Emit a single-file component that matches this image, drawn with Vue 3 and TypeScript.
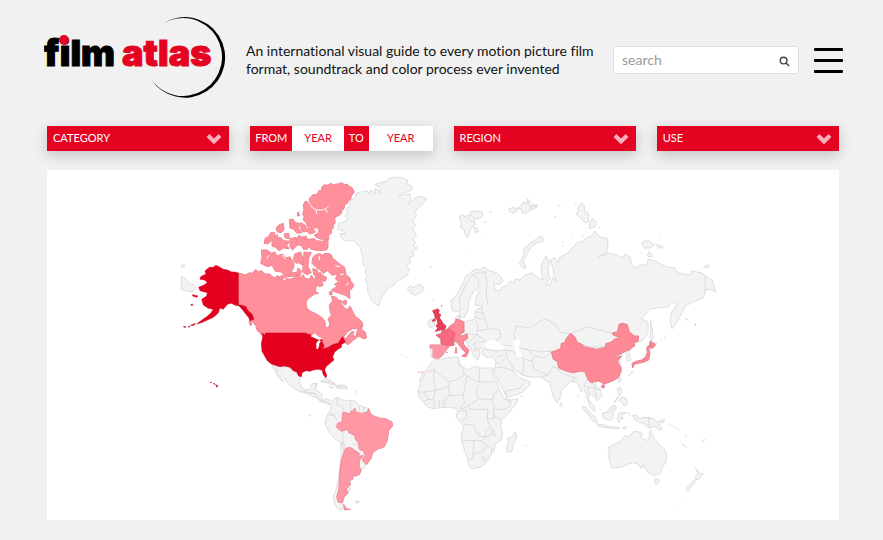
<script setup lang="ts">
import { ref } from 'vue'

interface Shape {
  tone: string
  d: string
}
interface Sheet {
  x: number
  y: number
  shapes: Shape[]
}

const query = ref('')
const fromYear = ref('')
const toYear = ref('')

// Each sheet is drawn at three times the map's scale, from its own origin.
const sheets: Sheet[] = [
  {
    x: 170, y: 250,
    shapes: [
      { tone: 'land', d: 'M34 78L48 86 55 98 72 104 78 115 66 126 50 122 34 120ZM34 44L44 46 42 52 34 52Z' },
      { tone: 'land', d: 'M306 345L318 349 340 350 358 352 366 360 380 372 392 378 388 395 395 412 408 420 422 418 428 404 442 400 438 415 432 425 448 430 455 450 468 446 480 450 470 459 452 455 440 444 428 440 410 430 390 425 370 415 352 398 340 382 328 366 318 352 322 368 334 384 340 395 330 388 320 372 310 356ZM450 395L462 387 480 390 496 402 480 400 465 394ZM498 408L512 404 530 410 522 415 500 414ZM478 410L490 412 484 416Z' },
      { tone: 'canada', d: 'M205 69L218 72 225 75 240 68 246 70 258 58 262 66 275 62 285 72 300 72 304 78 318 84 322 76 330 86 345 92 350 84 360 88 375 82 385 72 392 84 400 74 405 85 418 88 424 76 434 88 442 72 450 66 460 78 470 82 466 94 454 92 460 106 448 110 440 104 436 124 446 130 434 132 414 146 408 156 410 172 418 182 440 192 460 206 466 218 466 230 474 234 480 222 474 206 484 196 480 182 478 165 488 152 484 138 498 142 506 150 514 152 516 164 526 176 534 178 540 168 548 184 556 200 566 206 576 216 578 230 564 236 548 236 532 246 520 262 527 266 544 246 552 244 548 256 562 262 548 272 534 284 526 280 520 262 505 280 490 283 475 292 458 297 455 275 445 265 430 258 405 249 280 249 268 243 262 230 255 225 245 210 232 198 220 182 205 165Z' },
      { tone: 'canada', d: 'M562 240L570 236 578 220 574 238 586 246 590 264 580 266 570 260 558 258ZM258 232L270 240 282 252 274 254 262 242ZM240 208L246 218 242 228 237 216Z' },
      { tone: 'us', d: 'M205 69L196 66 185 66 172 60 160 58 150 52 138 46 130 52 118 52 105 63 108 72 92 80 90 88 104 90 112 98 100 106 86 112 90 122 112 128 110 138 95 148 100 165 115 175 130 178 122 190 110 200 96 210 80 222 94 218 112 210 130 202 144 190 150 174 160 178 172 163 185 160 196 166 206 167 214 174 225 188 236 202 240 212 252 208 246 192 234 182 228 170 216 166 205 165ZM68 134L84 138 80 142 68 138ZM63 163L68 163 68 166 63 166ZM62 226L76 220 72 226ZM40 230L48 230 46 233ZM54 230L60 228 58 232Z' },
      { tone: 'us', d: 'M276 250L284 254 286 249 405 249 412 252 428 256 438 262 450 262 458 272 445 270 440 284 438 296 444 298 448 282 454 272 462 286 458 297 475 292 490 283 505 280 512 268 518 260 526 276 514 284 514 292 504 298 494 306 488 320 492 330 480 340 468 350 464 360 470 376 468 384 460 374 456 360 444 358 430 360 420 364 408 362 396 368 394 380 386 378 380 366 370 362 360 352 344 348 330 350 316 346 304 342 292 332 284 318 276 304 274 280 278 262Z' },
      { tone: 'water', d: 'M424 258L434 252 444 260 456 266 446 268 436 264ZM440 280L446 272 446 288 442 296Z' },
      { tone: 'us', d: 'M136 403L144 408 141 412ZM121 396L125 397 122 399ZM130 400L134 401 131 403Z' },
    ],
  },
  {
    x: 240, y: 170,
    shapes: [
      { tone: 'canada', d: 'M208 92L208 84 216 80 215 76 232 72 236 62 244 62 246 50 254 44 262 46 272 40 280 44 292 42 306 38 314 44 322 42 328 50 336 52 343 66 334 78 332 88 326 92 322 100 314 104 312 116 306 120 304 130 298 136 288 140 284 146 286 158 280 166 280 174 274 180 274 190 266 196 266 208 252 210 232 204 222 196 234 190 238 178 228 176 220 178 210 170 204 172 198 158 190 150 192 140 188 132 192 120 190 104 196 94 204 96Z' },
      { tone: 'channel', d: 'M204 92L212 106 218 114 230 120 248 120 258 116 266 108M228 120L230 132M258 118L262 128M216 178L232 176 226 188' },
      { tone: 'canada', d: 'M204 208L222 206 230 212 248 214 264 206 264 230 260 240 236 242 214 238 204 230 208 218ZM170 204L178 196 186 202 198 198 204 212 206 218 202 238 190 238 186 228 174 224ZM180 158L194 164 200 172 202 184 192 186 184 182ZM204 176L216 174 226 186 212 192 204 188ZM148 148L160 148 166 158 178 160 176 176 186 188 172 190 160 178 150 174ZM118 164L130 160 132 180 124 188 112 186 108 174ZM172 128L176 126 178 138 173 138ZM92 188L104 188 104 206 94 212 84 222 72 220 76 204 86 200ZM96 214L110 206 120 202 132 212 150 214 140 226 148 236 130 234 118 242 106 232 96 228ZM150 206L168 202 172 226 158 240 150 230ZM132 192L146 190 148 206 136 204ZM104 198L112 194 114 202 106 206Z' },
      { tone: 'canada', d: 'M64 240L82 240 94 250 104 246 110 258 128 252 138 264 150 260 162 280 160 296 152 306 170 308 172 318 140 320 124 328 106 326 132 314 124 306 106 304 96 286 82 290 62 280 66 262ZM164 252L182 246 188 264 188 286 176 278 168 280 160 270ZM192 246L214 248 206 264 204 290 214 308 200 314 188 306 190 280ZM174 294L184 302 182 316 170 310ZM224 256L240 250 246 256 254 250 272 252 280 268 286 270 292 276 304 286 314 292 318 314 330 324 332 334 342 344 336 356 328 362 330 386 316 376 304 372 286 366 274 360 290 350 284 342 296 336 286 326 294 312 276 316 262 302 250 310 240 300 228 292 216 280 218 264ZM308 394L318 390 320 402 312 404ZM218 296L232 300 234 320 222 316ZM240 318L250 316 252 326 242 330ZM268 366L276 364 276 374 268 374Z' },
      { tone: 'channel', d: 'M128 254L136 268M238 258L238 270M286 288L300 290M300 314L312 312M318 344L326 340M86 256L80 268' },
      { tone: 'land', d: 'M296 160L318 154 322 146 316 140 324 126 318 118 330 108 328 94 346 82 350 70 372 64 382 62 390 74 392 60 408 70 404 56 412 58 420 72 420 52 404 44 420 38 440 34 446 26 464 22 486 22 504 32 500 40 516 50 516 60 500 66 484 70 476 78 494 74 510 72 512 88 506 104 524 84 540 78 560 86 552 98 536 114 524 126 530 138 518 152 526 166 518 178 530 196 518 206 526 218 520 228 532 234 518 246 522 258 508 262 512 276 500 288 508 300 500 318 484 326 470 334 462 346 446 352 432 372 424 384 416 408 404 400 394 390 388 374 382 360 384 344 376 328 382 316 374 308 380 294 370 286 368 266 364 250 362 232 350 222 340 210 316 214 304 204 300 190 316 192 312 184 292 178 296 168Z' },
      { tone: 'land', d: 'M504 352L514 348 518 354 530 346 544 344 552 356 546 366 526 376 512 370 516 364 504 362ZM572 292L576 290M578 388L582 390' },
    ],
  },
  {
    x: 300, y: 380,
    shapes: [
      { tone: 'land', d: 'M0 34L18 34 32 24 34 12 48 10 46 30 66 42 64 60 82 66 86 72 100 58 112 52 128 60 150 62 166 64 178 76 196 82 208 88 208 150 190 248 198 252 192 266 178 264 182 276 170 290 152 290 150 330 122 366 130 388 120 390 106 378 100 350 108 330 114 300 120 260 124 220 122 188 104 176 88 158 74 128 82 104 92 90 94 74 82 74 70 66 58 60 46 42 24 38Z' },
      { tone: 'border', d: 'M112 52L112 74 130 82 132 96M152 62L152 84M180 76L176 98M192 82L190 100M82 104L104 108 112 122M104 108L92 96M128 154L130 188 124 200M130 188L136 204M158 194L174 192 178 210 190 212M30 36L48 42M64 62L70 66M124 186L132 210 122 250 118 320' },
      { tone: 'land', d: 'M68 6L88 6 108 16 92 14 80 8ZM112 22L132 18 144 26 128 26ZM164 366L178 364 174 370ZM28 104L33 106 30 109ZM168 30L170 40' },
      { tone: 'brazil', d: 'M128 98L138 98 148 102 154 92 158 94 164 84 170 98 188 100 202 96 206 86 212 102 222 108 238 114 258 116 276 126 278 138 266 152 262 182 252 202 236 206 218 218 214 234 200 254 186 240 196 226 190 212 178 208 176 190 166 178 164 166 146 158 142 148 124 154 110 142 112 130 126 126Z' },
      { tone: 'brazil', d: 'M136 206L150 202 160 208 178 220 176 230 190 226 178 242 178 262 184 270 178 284 160 288 158 298 146 302 152 312 140 326 144 340 132 350 128 368 114 366 110 350 116 330 118 300 120 270 124 240 130 224ZM130 372L140 386 152 388 134 390Z' },
    ],
  },
  {
    x: 400, y: 340,
    shapes: [
      { tone: 'land', d: 'M106 58L122 58 150 52 174 52 178 64 176 76 192 82 204 90 216 84 222 78 240 84 270 84 280 84 278 100 290 126 298 150 308 168 312 176 330 180 354 176 348 192 330 214 306 238 302 258 308 286 302 302 286 312 282 332 270 350 258 370 240 382 214 386 206 376 202 354 194 334 186 306 184 286 190 262 182 246 168 232 172 214 172 206 152 202 132 202 116 204 98 206 82 200 68 184 56 168 54 152 60 138 60 118 70 98 84 84 94 68Z' },
      { tone: 'border', d: 'M104 88L76 98 76 104 60 128M104 88L104 92 146 124 170 120 194 104 186 82 174 64M104 92L100 98 106 152 72 156 56 156M106 152L118 148 146 138 148 124M146 138L150 166 136 176 136 202M194 104L200 108 238 128 238 84M238 126L284 126M238 136L230 142 230 160 236 176 258 178 276 180 282 164 294 150M200 108L194 150 188 166 150 166M188 166L194 188 180 206 190 206 206 196 232 180M206 196L208 208 264 208 262 240 272 262 256 272 258 290 236 288 234 276 226 276 224 256 192 252M172 214L200 210 200 232 184 242M118 180L118 202M104 178L102 204M72 156L84 178 98 180 106 152M84 178L72 184M128 178L130 202M276 180L284 196 280 208 308 208 326 202 334 186 312 176M280 208L282 236 264 236M282 228L302 240M184 300L222 302 246 302 258 292 276 282 276 266M222 302L218 352 206 362M222 340L244 338 262 318 244 300M262 318L276 326 272 342M286 290L280 270 276 266M248 352L258 356 252 364 246 358Z' },
      { tone: 'land', d: 'M346 276L350 290 342 310 334 336 322 336 320 320 326 308 322 296 336 290ZM362 168L370 170M370 318L374 320M380 314L384 316M4 42L10 44M16 48L20 50M54 74L58 76' },
      { tone: 'spain', d: 'M54 96L58 98M62 96L66 97M68 94L70 97' },
    ],
  },
  {
    x: 400, y: 190,
    shapes: [
      { tone: 'land', d: 'M178 80L190 74 196 82 206 72 214 96 222 88 226 104 216 112 208 126 204 142 196 136 192 118 182 112 184 100ZM210 66L228 62 246 66 248 78 240 86 226 86 212 78ZM222 112L232 114 236 124 226 128ZM328 56L344 52 352 62 340 70 328 64ZM350 56L364 46 372 36 384 42 382 26 390 34 388 48 410 44 412 50 394 56 386 64 376 72 364 66 366 56ZM268 68L276 64M252 98L260 96M238 146L242 144M212 180L215 182M90 232L95 230M98 328L102 331M464 80L470 84' },
      { tone: 'land', d: 'M358 222L370 198 372 176 388 162 408 148 422 138 430 144 428 154 408 160 394 172 386 184 378 196 370 214 378 234 370 236Z' },
      { tone: 'land', d: 'M86 392L96 388 106 394 102 410 88 412 84 400Z' },
      { tone: 'uk', d: 'M98 362L106 360 112 356 118 362 114 370 122 374 118 384 124 392 130 402 138 408 134 418 122 420 106 424 114 414 108 408 114 400 112 390 106 384 104 374ZM98 390L104 386 106 392 98 394ZM124 346L126 350' },
    ],
  },
  {
    x: 530, y: 190,
    shapes: [
      { tone: 'land', d: 'M138 72L146 64 142 56 156 38 164 50 164 64 176 72 176 94 168 98 156 90 146 80ZM188 84L200 98 196 110 178 116 180 98ZM334 160L344 152 360 154 374 164 362 174 342 174ZM378 164L394 168 400 174 386 174ZM352 196L358 184 368 200 356 200ZM522 230L530 224 538 230 530 234ZM0 60L8 42 14 52 22 46 14 56ZM84 48L92 46M72 80L78 82M134 40L140 42M96 156L102 156M96 172L100 166M126 136L130 132M156 138L162 134M204 112L210 114M388 144L392 142M332 188L336 190M464 386L474 390' },
      { tone: 'land', d: 'M362 392L366 420 370 442 364 456 360 440 362 420ZM376 462L384 456M390 452L396 448M402 446L406 440M416 430L418 428' },
      { tone: 'china', d: 'M362 454L376 466 368 474 358 474ZM494 403L498 405' },
    ],
  },
  {
    x: 530, y: 310,
    shapes: [
      { tone: 'land', d: 'M236 412L250 404 272 394 284 378 296 380 310 366 322 364 336 370 332 382 350 392 358 386 358 366 362 360 368 376 376 390 388 404 402 416 410 432 408 456 396 474 390 492 372 496 354 488 346 476 342 464 334 476 324 462 308 458 288 464 272 472 246 474 240 456 234 432 238 426ZM374 506L386 508 388 516 378 524 374 514ZM496 474L504 482 508 490 520 490 510 504 500 510 496 500 504 492ZM496 508L494 520 480 534 474 544 468 538 480 522Z' },
      { tone: 'land', d: 'M156 290L168 292 182 310 196 322 204 340 190 334 176 316ZM202 344L220 344 238 350 268 352 266 356 238 354 206 350ZM276 354L292 350 284 358ZM216 310L228 308 240 294 254 284 260 294 250 306 248 326 238 332 220 322ZM264 312L272 308 290 308 274 316 280 328 272 324 268 338 262 330 266 318ZM308 316L320 316 328 326 342 322 372 326 386 342 398 356 390 360 376 350 356 354 342 340 326 336 314 328ZM386 334L404 328 400 338 388 338ZM262 236L270 232 276 246 268 256 264 248ZM274 262L288 264 292 282 284 290 274 276 266 270ZM252 276L266 258 256 276ZM264 206L270 202 272 210 268 218ZM414 340L422 346M428 348L434 352M438 354L448 362M464 376L470 384M456 402L470 412M514 394L526 388M518 396L522 400M90 276L98 284 92 290 88 282M144 256L146 264M296 306L300 320M210 296L212 298M464 570L468 572M432 598L434 599' },
      { tone: 'border', d: 'M356 320L358 354M222 310L238 306 254 294' },
      { tone: 'china', d: 'M64 126L76 122 92 116 94 100 104 98 108 86 122 70 136 82 140 96 158 104 162 110 200 118 226 112 228 100 240 98 256 86 272 82 250 76 248 68 262 66 268 42 280 40 292 44 298 66 314 78 326 78 324 94 312 98 314 108 296 120 278 128 262 138 258 132 270 124 262 122 256 136 262 142 276 138 264 150 264 160 272 168 274 182 266 202 250 212 234 218 222 222 204 212 184 218 176 212 170 200 164 184 150 184 130 188 110 184 86 174 82 154 70 148ZM216 226L224 224 222 234 214 232Z' },
      { tone: 'china', d: 'M360 94L376 102 374 106 362 108 356 116 360 128 356 150 342 156 326 160 314 162 308 174 306 160 318 154 334 150 346 142 352 128 350 112 358 106ZM304 188L308 186M297 196L300 193' },
    ],
  },
]

const eurasia =
  'M451 300L455 297 460 290 461 286 464 281 466 276 470 274 472 271 477 269 480 270 483 267 488 270 497 273 501 277 503 281 500 285 494 283 495 290 500 291 502 287 508 285 510 281 514 283 515 279 520 280 525 275 532 273 537 277 543 280 541 270 542 263 546 256 549 262 548 272 550 279 546 285 550 285 553 277 557 282 554 275 553 268 550 260 555 258 558 263 560 257 568 253 571 249 578 242 582 242 588 237 592 236 595 231 600 237 607 238 608 244 607 252 598 257 610 253 617 255 623 258 625 254 630 257 632 266 635 268 640 265 647 265 648 259 655 261 661 264 667 267 675 268 678 273 690 275 692 271 702 273 707 277 712 280 716 292 712 290 707 289 705 293 703 298 693 302 685 306 682 313 677 322 672 329 670 322 671 313 677 305 673 302 668 307 657 308 650 309 641 319 647 321 648 323 648 333 642 341 634 343 630 347 629 352 631 360 627 361 626 352 622 351 620 360 620 370 615 378 608 382 598 381 595 384 600 389 602 396 597 401 594 397 590 393 588 399 594 406 595 412 590 407 587 397 584 389 581 392 578 383 571 381 566 386 562 390 560 398 557 403 553 396 551 387 549 382 545 380 540 377 530 377 522 375 515 370 513 371 519 377 523 379 530 382 529 386 523 392 507 398 503 390 499 382 494 372 496 362 493 357 486 357 482 354 482 349 478 348 480 353 478 360 474 357 471 350 467 343 461 338 455 345 449 344 446 352 440 358 435 359 431 357 430 345 441 345 441 339 436 335 443 333 450 326 455 322 456 317 460 315 459 322 468 321 475 319 475 311 483 306 475 305 476 298 479 292 476 289 472 294 469 301 468 310 465 317 461 318 459 311 455 312 452 310Z'

const eurasiaBorders =
  'M461 311L459 300 463 290 468 281 472 275 480 272 487 272M479 288L478 278 472 275M488 305L486 295 487 284 485 272M481 307L485 320 488 328 500 330 501 337 496 341M463 322L464 333 477 335 478 323 475 320M477 331L488 329M477 335L485 340 488 345M467 336L464 344 472 349M477 335L470 341 466 341M471 346L476 342 485 342M473 351L480 348M475 343L475 350M475 317L484 320M476 312L484 313M517 343L514 335 516 326 530 328 540 321 545 319 555 324 560 332 570 334 587 327 600 330 614 334M572 334L578 343 590 347 604 347M514 345L520 348 530 350 540 352 552 351M525 348L535 356 545 358 551 352M535 356L532 361 534 369 548 375 553 367 557 368M532 361L523 359 518 353 506 350 506 356 512 366 514 370M522 375L524 367 523 359M541 377L548 375M556 369L563 374 573 377 573 382M574 377L578 379M506 350L496 351 484 349M497 357L503 355M496 362L500 364 505 358M497 368L503 367 513 371M507 398L506 391 520 388 523 384M587 379L584 386 589 387 588 394M591 380L596 389 601 390M589 387L594 388 597 398M705 276L705 292M626 350L632 350M459 322L460 316M502 345L512 346'

const seas =
  'M486 343L493 340 500 344 505 347 500 350 486 348ZM514 341L520 339 518 347 522 356 518 357 515 349ZM460 338L464 342 471 352 468 352 462 344Z'
</script>

<template>
  <div class="page">
    <header class="top">
      <a class="logo" href="#" aria-label="film atlas">
        <svg viewBox="0 0 190 90">
          <text class="logo-dark" x="0" y="54">film</text>
          <text class="logo-red" x="78" y="54">atlas</text>
          <circle class="logo-dot" cx="20" cy="28" r="5" />
          <path d="M119 11.500A40.300 40.300 0 1 1 106.500 66.500A39 39 0 1 0 119 11.500Z" />
        </svg>
      </a>
      <p class="tagline">
        An international visual guide to every motion picture film<br />format, soundtrack and color process ever invented
      </p>
      <form class="search" role="search" @submit.prevent>
        <input v-model="query" type="text" placeholder="search" aria-label="search" />
        <button type="submit" aria-label="Submit search">
          <svg viewBox="0 0 12 12"><circle cx="5" cy="5" r="3.600" /><path d="M7.600 7.600L11 11" /></svg>
        </button>
      </form>
      <button class="menu" type="button" aria-label="Menu"><span /><span /><span /></button>
    </header>

    <main>
      <div class="filters">
        <div class="pick">
          <select aria-label="Category"><option>CATEGORY</option></select>
          <svg viewBox="0 0 16 11"><path d="M2 2.500L8 8.500 14 2.500" /></svg>
        </div>
        <div class="years">
          <label for="from-year">FROM</label>
          <input id="from-year" v-model="fromYear" class="from" type="text" placeholder="YEAR" />
          <label for="to-year">TO</label>
          <input id="to-year" v-model="toYear" class="to" type="text" placeholder="YEAR" />
        </div>
        <div class="pick">
          <select aria-label="Region"><option>REGION</option></select>
          <svg viewBox="0 0 16 11"><path d="M2 2.500L8 8.500 14 2.500" /></svg>
        </div>
        <div class="pick">
          <select aria-label="Use"><option>USE</option></select>
          <svg viewBox="0 0 16 11"><path d="M2 2.500L8 8.500 14 2.500" /></svg>
        </div>
      </div>

      <section class="map" aria-label="World map">
        <svg viewBox="47 170 792 350">
          <path class="land" :d="eurasia" />
          <path class="border" :d="eurasiaBorders" />
          <path class="water" :d="seas" />
          <path class="germany" d="M450 326L455 323 456 319 460 320 464 322 464 332 459 335 462 336 467 334 468 338 463 341 464 345 469 350 468 353 466 357 462 356 466 353 462 349 457 342 453 341 453 336 450 332 447 330Z" />
          <path class="france" d="M436 335L441 334 442 331 449 329 455 333 453 341 454 345 449 346 441 344 441 339Z" />
          <path class="spain" d="M430 345L441 345 449 347 445 351 442 356 437 359 433 357 433 348 430 348ZM446 352L448 353M456 347L457 353 455 353Z" />
          <g v-for="sheet in sheets" :key="`${sheet.x}-${sheet.y}`" :transform="`translate(${sheet.x} ${sheet.y}) scale(0.33333)`">
            <path v-for="(shape, i) in sheet.shapes" :key="i" :class="shape.tone" :d="shape.d" />
          </g>
        </svg>
      </section>
    </main>
  </div>
</template>

<style>
body {
  margin: 0;
  background: #f1f1f1;
}
</style>

<style scoped>
.page {
  padding: 15px 44px 20px 47px;
  font-family: Lato, "Liberation Sans", sans-serif;
  font-variant-ligatures: none;
  color: #111;
}
.top {
  display: flex;
  align-items: center;
  height: 90px;
  margin: 0 -4px 0 -3px;
}
.logo {
  width: 190px;
  height: 90px;
  flex: none;
  margin-top: -6px;
}
.logo svg {
  display: block;
  width: 100%;
}
.logo text {
  font-family: Inter, Lato, sans-serif;
  font-size: 36px;
  font-weight: 900;
  stroke-width: 1px;
}
.logo-dark {
  fill: #000;
  stroke: #000;
}
.logo-red {
  stroke: #e50322;
}
.logo-red,
.logo-dot {
  fill: #e50322;
}
.tagline {
  flex: 1;
  margin: 0 0 0 12px;
  font-size: 14px;
  line-height: 18px;
  white-space: nowrap;
}
.search {
  display: flex;
  width: 186px;
  height: 28px;
  box-sizing: border-box;
  border: 1px solid #e0e0e0;
  border-radius: 2px;
  background: #fff;
}
.search input {
  flex: 1;
  min-width: 0;
  padding: 0 8px 2px;
  border: 0;
  background: none;
  font: 14px Lato, sans-serif;
  outline: 0;
}
.search input::placeholder {
  color: #999;
}
.search button {
  width: 26px;
  padding: 2px 8px 0 7px;
  border: 0;
  background: none;
}
.search button svg {
  display: block;
  width: 11px;
  fill: none;
  stroke: #444;
  stroke-width: 1.600;
}
.menu {
  display: flex;
  flex-direction: column;
  justify-content: space-between;
  width: 29px;
  height: 25px;
  margin-left: 15px;
  padding: 0;
  border: 0;
  background: none;
}
.menu span {
  height: 3px;
  border-radius: 1px;
  background: #000;
}
.filters {
  display: grid;
  grid-template-columns: repeat(4, minmax(0, 1fr));
  gap: 21px;
  margin: 21px 0 19px;
}
.pick,
.years {
  display: flex;
  height: 25px;
  box-shadow: 0 4px 14px rgba(0, 0, 0, 0.2);
}
.pick {
  align-items: center;
  background: #e50322;
}
.pick select {
  flex: 1;
  align-self: stretch;
  margin-right: -24px;
  padding: 0 6px 2px;
  border: 0;
  border-radius: 0;
  appearance: none;
  background: none;
  color: #fff;
  font: 11px Lato, sans-serif;
}
.pick svg {
  width: 16px;
  margin-right: 7px;
  pointer-events: none;
  fill: none;
  stroke: #fbb1bb;
  stroke-width: 4;
}
.years label {
  padding: 0 5px;
  background: #e50322;
  color: #fff;
  font-size: 11px;
  line-height: 23px;
}
.years input {
  min-width: 0;
  padding: 0 0 2px;
  border: 0;
  border-radius: 0;
  background: #fff;
  color: #e50322;
  font: 11px Lato, sans-serif;
  text-align: center;
}
.years .from {
  flex: 51;
}
.years .to {
  flex: 63;
}
.years input::placeholder {
  color: #e50322;
}
.map {
  background: #fff;
}
.map svg {
  display: block;
  width: 100%;
}
.map path {
  stroke-width: 1px;
  stroke-linejoin: round;
  vector-effect: non-scaling-stroke;
}
.map .land {
  fill: #f3f3f3;
  stroke: #dedede;
}
.map .border {
  fill: none;
  stroke: #dcdcdc;
}
.map .water {
  fill: #fff;
  stroke: #fff;
}
.map .channel {
  fill: none;
  stroke: #fff;
}
.map .canada {
  fill: #fe8f9b;
  stroke: #f08793;
}
.map .us {
  fill: #e4001f;
  stroke: #d0001c;
  stroke-width: 0.500px;
}
.map .brazil,
.map .spain {
  fill: #ff97a4;
  stroke: #f28c99;
}
.map .china,
.map .germany {
  fill: #fe8896;
  stroke: #e98391;
}
.map .france {
  fill: #f66a7e;
  stroke: #e4637a;
}
.map .uk {
  fill: #e83f57;
  stroke: #d93a50;
}
</style>
